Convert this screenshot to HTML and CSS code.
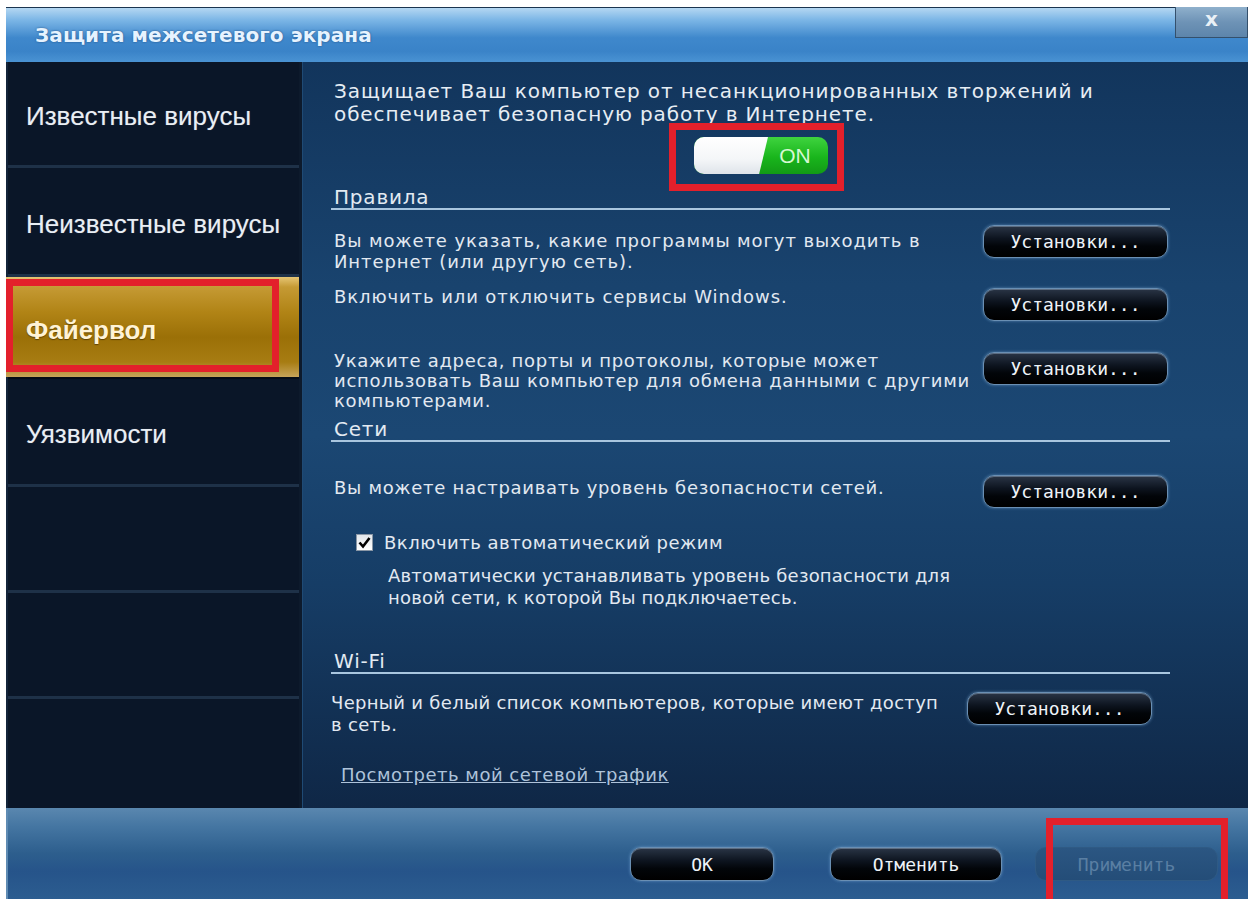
FILE: index.html
```html
<!DOCTYPE html>
<html lang="ru">
<head>
<meta charset="utf-8">
<title>Защита межсетевого экрана</title>
<link rel="stylesheet" href="styles.css">
</head>
<body>
<div class="window">
  <header class="titlebar">
    <h1 class="title">Защита межсетевого экрана</h1>
    <button class="close" type="button">x</button>
  </header>

  <div class="body">
    <nav class="sidebar">
      <div class="nav-item h1">Известные вирусы</div>
      <div class="nav-item h2">Неизвестные вирусы</div>
      <div class="nav-item active">Файервол<span class="mark mark-nav"></span></div>
      <div class="nav-item h4">Уязвимости</div>
      <div class="nav-item h5"></div>
      <div class="nav-item h6"></div>
      <div class="nav-item last"></div>
    </nav>

    <main class="content">
      <p class="intro">Защищает Ваш компьютер от несанкционированных вторжений и<br>обеспечивает безопасную работу в Интернете.</p>

      <div class="toggle-row">
        <div class="mark-box">
          <div class="toggle">
            <span class="toggle-off"></span>
            <span class="toggle-on">ON</span>
          </div>
        </div>
      </div>

      <h2 class="section-title rules">Правила</h2>
      <div class="row row-1">
        <p class="row-text wide">Вы можете указать, какие программы могут выходить в<br>Интернет (или другую сеть).</p>
        <button class="btn" type="button">Установки...</button>
      </div>
      <div class="row row-2">
        <p class="row-text wide">Включить или отключить сервисы Windows.</p>
        <button class="btn" type="button">Установки...</button>
      </div>
      <div class="row row-3">
        <p class="row-text tight">Укажите адреса, порты и протоколы, которые может<br>использовать Ваш компьютер для обмена данными с другими<br>компьютерами.</p>
        <button class="btn" type="button">Установки...</button>
      </div>

      <h2 class="section-title nets">Сети</h2>
      <div class="row row-4">
        <p class="row-text">Вы можете настраивать уровень безопасности сетей.</p>
        <button class="btn" type="button">Установки...</button>
      </div>
      <label class="check-row">
        <span class="checkbox">
          <svg viewBox="0 0 17 17" width="17" height="17"><path d="M3.5 8.5 L7 12.5 L13.5 4" fill="none" stroke="#000" stroke-width="2.6"/></svg>
        </span>
        <span class="check-label">Включить автоматический режим</span>
      </label>
      <p class="check-desc">Автоматически устанавливать уровень безопасности для<br>новой сети, к которой Вы подключаетесь.</p>

      <h2 class="section-title wifi">Wi-Fi</h2>
      <div class="row row-5">
        <p class="row-text flush">Черный и белый список компьютеров, которые имеют доступ<br>в сеть.</p>
        <button class="btn" type="button">Установки...</button>
      </div>
      <a class="traffic-link" href="#">Посмотреть мой сетевой трафик</a>
    </main>
  </div>

  <footer class="footer">
    <button class="btn btn-ok" type="button">OK</button>
    <button class="btn btn-cancel" type="button">Отменить</button>
    <button class="btn btn-apply" type="button" disabled>Применить</button>
    <span class="mark mark-apply"></span>
  </footer>
</div>
</body>
</html>
```

FILE: styles.css
```css
* { box-sizing: border-box; }

html, body {
  margin: 0;
  padding: 0;
  background: #ffffff;
}

body {
  width: 1256px;
  height: 899px;
  overflow: hidden;
  font-family: "DejaVu Sans", Verdana, sans-serif;
}

.window {
  margin: 7px 0 0 6px;
  width: 1242px;
  height: 892px;
  display: flex;
  flex-direction: column;
  background: #0b1729;
}

/* ---------- title bar ---------- */
.titlebar {
  position: relative;
  height: 55px;
  flex: none;
  display: flex;
  align-items: center;
  padding-left: 29px;
  border-top: 1px solid #1b3550;
  background: linear-gradient(180deg, #b4d7f2 0%, #7cb6e6 22%, #3f88cc 55%, #3a83c8 80%, #4a93d3 100%);
}

.title {
  margin: 0 0 1px 0;
  font-family: "DejaVu Sans", Verdana, sans-serif;
  font-weight: bold;
  font-size: 20px;
  letter-spacing: 0.1px;
  color: #e6f3ff;
  text-shadow: 0 0 2px rgba(20, 60, 110, 0.8);
}

.close {
  position: absolute;
  top: -1px;
  right: 0;
  width: 73px;
  height: 31px;
  border: 1px solid #34506c;
  border-top: none;
  background: linear-gradient(180deg, #8fb0cc 0%, #6e93b6 50%, #5d85ab 100%);
  color: #e9f0f6;
  font-family: "DejaVu Sans", sans-serif;
  font-weight: bold;
  font-size: 20px;
  line-height: 22px;
  padding: 0 0 6px 0;
}

/* ---------- body ---------- */
.body {
  flex: 1;
  display: flex;
  min-height: 0;
}

.sidebar {
  width: 296px;
  flex: none;
  display: flex;
  flex-direction: column;
  background: #0a1628;
  border-left: 2px solid #13243a;
  border-right: 3px solid #0d1a2c;
}

.nav-item {
  position: relative;
  display: flex;
  align-items: center;
  padding: 6px 0 0 18px;
  border-bottom: 3px solid #1e3148;
  font-family: "Liberation Sans", Arial, sans-serif;
  font-size: 26px;
  color: #e9eef4;
  text-shadow: 0 0 1px rgba(255, 255, 255, 0.3);
}

.nav-item.h1 { height: 106px; }
.nav-item.h2 { height: 109px; }
.nav-item.h4 { height: 110px; border-top: 2px solid #060d17; }
.nav-item.h5 { height: 106px; }
.nav-item.h6 { height: 106px; }
.nav-item.last { flex: 1; border-bottom: none; }

.nav-item.active {
  height: 100px;
  border-bottom: none;
  margin-left: -2px;
  padding-left: 20px;
  font-weight: bold;
  font-size: 26px;
  color: #fff3d6;
  background: linear-gradient(180deg, #e6c574 0%, #c59a34 10%, #b18416 35%, #9b7007 60%, #a77c12 85%, #c7a45a 100%);
  text-shadow: 0 1px 1px rgba(70, 45, 0, 0.7);
}

/* annotation frames */
.mark {
  position: absolute;
  border: 7px solid #e3202b;
  pointer-events: none;
}

.mark-nav {
  left: 0;
  top: 2px;
  width: 273px;
  height: 93px;
}

/* ---------- content ---------- */
.content {
  flex: 1;
  display: flex;
  flex-direction: column;
  align-items: stretch;
  padding: 18px 78px 0 28px;
  background: linear-gradient(180deg, #12355c 0%, #19436e 30%, #1b4773 50%, #163d66 70%, #0f2746 100%);
  border-left: 1px solid #1f4a74;
  color: #e4ebf2;
  font-size: 18px;
  letter-spacing: 0.5px;
}

.intro {
  margin: 0;
  padding-left: 3px;
  font-size: 20px;
  line-height: 23px;
  letter-spacing: 0.9px;
  color: #e6edf4;
  white-space: nowrap;
}

.toggle-row {
  display: flex;
  margin-top: -3px;
  padding-left: 338px;
}

.mark-box {
  border: 7px solid #e3202b;
  padding: 7px 9px 10px 18px;
}

.toggle {
  position: relative;
  width: 134px;
  height: 37px;
  border-radius: 10px;
  overflow: hidden;
  display: flex;
  background: linear-gradient(180deg, #3fd43f 0%, #19b51c 55%, #129a16 100%);
}

.toggle-off {
  height: 100%;
  width: 74px;
  background: linear-gradient(180deg, #ffffff 0%, #f4f6f8 60%, #dfe4ea 100%);
  clip-path: polygon(0 0, 100% 0, 88% 100%, 0 100%);
}

.toggle-on {
  flex: 1;
  display: flex;
  align-items: center;
  justify-content: center;
  padding-right: 6px;
  font-family: "Liberation Sans", Arial, sans-serif;
  font-size: 21px;
  letter-spacing: 0;
  color: #d6f8d2;
}

.section-title {
  margin: 0;
  padding-left: 3px;
  font-weight: normal;
  font-size: 20px;
  line-height: 22px;
  letter-spacing: 0.8px;
  color: #e2eaf2;
  border-bottom: 2px solid #a9c6df;
}

.section-title.rules { margin-top: -5px; }
.section-title.nets { margin-top: 8px; line-height: 21px; }
.section-title.wifi { margin-top: 41px; }

.row {
  display: flex;
  justify-content: space-between;
  align-items: flex-start;
}

.row-text {
  margin: 0;
  padding-left: 3px;
  line-height: 21px;
  color: #e2e9f1;
  white-space: nowrap;
}

.row-text.wide { letter-spacing: 0.9px; }
.row-text.tight { line-height: 20px; letter-spacing: 0.7px; }
.row-text.flush { padding-left: 0; line-height: 22px; letter-spacing: 0.3px; }

.row-1 { margin-top: 15px; }
.row-1 .row-text { padding-top: 5px; }
.row-2 { margin-top: 14px; }
.row-2 .btn { margin-top: 2px; }
.row-3 { margin-top: 30px; }
.row-3 .btn { margin-top: 1px; }
.row-4 { margin-top: 33px; }
.row-4 .row-text { padding-top: 2px; letter-spacing: 0.7px; }
.row-5 { margin-top: 18px; }
.row-5 .btn { margin-right: 18px; }

.btn {
  flex: none;
  width: 185px;
  height: 33px;
  margin-right: 2px;
  border: 1px solid #6a8fb3;
  border-radius: 11px;
  background: linear-gradient(180deg, #2a3546 0%, #0d141f 40%, #020509 65%, #000000 100%);
  box-shadow: 0 0 3px rgba(140, 190, 235, 0.55), inset 0 1px 0 rgba(190, 215, 240, 0.35);
  color: #eef3f8;
  font-family: "DejaVu Sans Mono", "Liberation Mono", monospace;
  font-size: 18px;
  letter-spacing: 0;
  padding: 0;
}

.check-row {
  display: flex;
  align-items: center;
  margin-top: 23px;
  padding-left: 25px;
  height: 22px;
  color: #e2e9f1;
}

.checkbox {
  width: 17px;
  height: 17px;
  display: flex;
  border: 1px solid #8a97a6;
  background: linear-gradient(180deg, #e2e6ea, #ffffff);
  margin-right: 11px;
}

.checkbox svg { display: block; margin: -1px; }

.check-desc {
  margin: 12px 0 0 0;
  padding-left: 57px;
  line-height: 22px;
  letter-spacing: 0.2px;
  color: #e2e9f1;
  white-space: nowrap;
}

.traffic-link {
  align-self: flex-start;
  margin-top: 28px;
  margin-left: 10px;
  line-height: 22px;
  color: #aec3da;
  text-decoration: underline;
}

/* ---------- footer ---------- */
.footer {
  position: relative;
  height: 91px;
  flex: none;
  display: flex;
  align-items: flex-start;
  padding: 39px 0 0 622px;
  border-left: 2px solid #5f8bb3;
  background: linear-gradient(180deg, #5a87af 0%, #4576a2 20%, #2d5e8d 50%, #26548a 70%, #2c5d90 100%);
}

.footer .btn {
  height: 34px;
  margin: 0;
}

.btn-ok { width: 144px; }
.btn-cancel { width: 172px; margin-left: 56px !important; }
.btn-apply {
  width: 183px;
  margin-left: 33px !important;
  border-color: #2f5a84;
  background: linear-gradient(180deg, #2b5682 0%, #244d78 100%);
  box-shadow: none;
  color: #5a7fa3;
}

.mark-apply {
  left: 1038px;
  top: 10px;
  width: 182px;
  height: 90px;
}
```
